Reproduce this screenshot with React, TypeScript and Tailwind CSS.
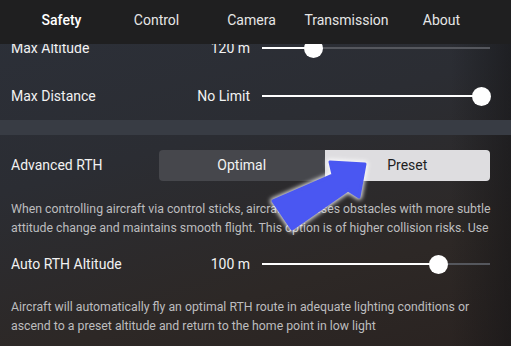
import React from "react";

const tabs = ["Safety", "Control", "Camera", "Transmission", "About"];

function Slider({ pos }: { pos: number }) {
  // pos: thumb centre in px from left of the 228px track
  return (
    <div className="relative h-[20px] w-[228px] shrink-0">
      <div className="absolute left-0 right-0 top-[9px] h-[2px] bg-[#55575d]" />
      <div className="absolute left-0 top-[9px] h-[2px] bg-white" style={{ width: pos }} />
      <div
        className="absolute top-[1px] h-[19px] w-[19px] rounded-full bg-white"
        style={{ left: pos - 9.5 }}
      />
    </div>
  );
}

function SliderRow({ label, value, pos }: { label: string; value: string; pos: number }) {
  return (
    <div className="flex h-[48px] items-center">
      <div className="flex-1 text-[14px] text-[#f2f2f2]">{label}</div>
      <div className="text-[14px] text-[#f2f2f2]">{value}</div>
      <div className="ml-[12px]">
        <Slider pos={pos} />
      </div>
    </div>
  );
}

function Arrow() {
  const pts = "13,51 73,25 70,12 105,14 99,47 88,40 32,79";
  return (
    <svg className="absolute left-[260px] top-[150px]" width="120" height="100" viewBox="0 0 120 100">
      <defs>
        <filter id="glow" x="-20%" y="-20%" width="140%" height="140%">
          <feGaussianBlur stdDeviation="2" />
        </filter>
      </defs>
      <polygon points={pts} fill="#ffffff" stroke="#ffffff" strokeWidth="6" strokeLinejoin="round" filter="url(#glow)" opacity="0.85" />
      <polygon points={pts} fill="#4a57f2" stroke="#4a57f2" strokeWidth="3" strokeLinejoin="round" />
    </svg>
  );
}

export default function App() {
  return (
    <div className="relative h-[346px] w-[511px] overflow-hidden bg-[linear-gradient(165deg,#2c3039_0%,#2b2d33_40%,#2d2826_75%,#2a2321_100%)] font-['Roboto',sans-serif]">
      <div className="absolute inset-y-0 right-0 w-[60px] bg-[linear-gradient(90deg,rgba(20,20,22,0)_0%,rgba(20,20,22,0.55)_100%)]" />

      <div className="relative pl-[11px] pr-[21px] pt-[24px]">
        <SliderRow label="Max Altitude" value="120 m" pos={51} />
        <SliderRow label="Max Distance" value="No Limit" pos={219} />
      </div>

      <div className="relative h-[15px] bg-[#383c44]" />

      <div className="relative pl-[11px] pr-[21px] pt-[15px]">
        <div className="flex h-[31px] items-center">
          <div className="flex-1 text-[14px] text-[#f2f2f2]">Advanced RTH</div>
          <div className="flex h-[31px] w-[331px] overflow-hidden rounded-[4px] text-[14px]">
            <div className="flex flex-1 items-center justify-center bg-[#46474c] text-[#f2f2f2]">Optimal</div>
            <div className="flex flex-1 items-center justify-center bg-[#dedde0] text-[#1d1d1f]">Preset</div>
          </div>
        </div>
        <p className="mr-[-4px] mt-[19px] h-[38px] overflow-hidden text-[12.3px] leading-[19px] text-[#bdbdbf]">
          When controlling aircraft via control sticks, aircraft bypasses obstacles with more subtle attitude change and maintains smooth flight. This option is of higher collision risks. Use
        </p>
        <div className="mt-[2px]">
          <SliderRow label="Auto RTH Altitude" value="100 m" pos={176} />
        </div>
        <p className="mt-[10px] text-[12.3px] leading-[19px] text-[#bdbdbf]">
          Aircraft will automatically fly an optimal RTH route in adequate lighting conditions or ascend to a preset altitude and return to the home point in low light
        </p>
      </div>

      <div className="absolute left-0 right-0 top-0 grid h-[44px] grid-cols-5 bg-[#1f1f20] pb-[3px] pl-[14px] pr-[22px]">
        {tabs.map((t, i) => (
          <div
            key={t}
            className={`flex items-center justify-center text-[14px] ${i === 0 ? "font-medium text-white" : "text-[#e6e6e6]"}`}
          >
            {t}
          </div>
        ))}
      </div>

      <Arrow />
    </div>
  );
}
